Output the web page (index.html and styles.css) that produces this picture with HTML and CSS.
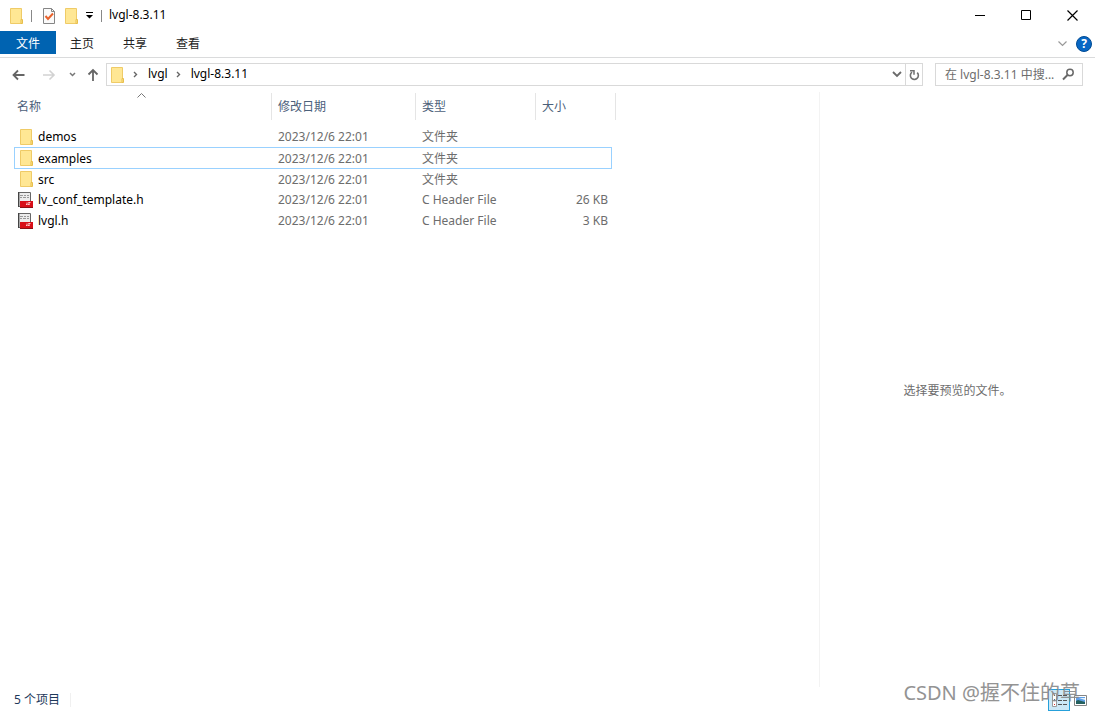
FILE: index.html
```html
<!DOCTYPE html>
<html lang="zh-CN">
<head>
<meta charset="utf-8">
<title>lvgl-8.3.11</title>
<link rel="stylesheet" href="styles.css">
</head>
<body>
<svg class="defs" aria-hidden="true">
  <symbol id="folder" viewBox="0 0 14 16">
    <path d="M.5.5h11v15H.5z" fill="#ffe794" stroke="#efcb67"/>
    <path d="M11 11.500h1.500v4H11z" fill="#ffe794" stroke="#e8bf4d"/>
  </symbol>
  <symbol id="header-file" viewBox="0 0 16 16">
    <path d="M1 .5h11.500v14H1z" fill="#ececec" stroke="#666"/>
    <path d="M2 3h3v1H2zM6 3h2v1H6zM9 3h2v1H9zM2 5h2v1H2zM5 5h3v1H5zM9 5h2v1H9z" fill="#999"/>
    <path d="M2 9h13v6H2z" fill="#d80f18"/>
    <path d="M2 15h13v1H2z" fill="#8c1115"/>
    <path d="M8 12.500h1v-2M12.500 10.500h-2l1 2h-2" fill="none" stroke="#ffc5c5"/>
    <path d="M0 0h1v15H0z" fill="#444"/>
  </symbol>
</svg>
<div class="window">
  <header class="titlebar">
    <svg class="folder"><use href="#folder"/></svg>
    <span class="bar"></span>
    <button class="plain props" aria-label="属性"><svg width="12" height="16" viewBox="0 0 12 16"><path d="M.5.5h8l3 3v12H.5z" fill="#fafafa" stroke="#858585"/><path d="M8.500.5v3h3" fill="none" stroke="#858585"/><path d="M2.500 8l2.500 3 5-5.500" fill="none" stroke="#e8622c" stroke-width="2"/></svg></button>
    <button class="plain newdir" aria-label="新建文件夹"><svg class="folder"><use href="#folder"/></svg></button>
    <button class="plain" aria-label="自定义快速访问工具栏"><svg width="7" height="7" viewBox="0 0 7 7"><path d="M0 0h7v1H0zM0 3h7L3.500 6.500z"/></svg></button>
    <span class="bar second"></span>
    <h1>lvgl-8.3.11</h1>
    <div class="controls">
      <button class="plain" aria-label="最小化"><svg width="11" height="11"><path d="M0 5.500h10" stroke="#000"/></svg></button>
      <button class="plain" aria-label="最大化"><svg width="11" height="11"><path d="M.5.5h9v9h-9z" fill="none" stroke="#000"/></svg></button>
      <button class="plain" aria-label="关闭"><svg width="11" height="11"><path d="M.5.5l10 10M10.500.5l-10 10" stroke="#000" stroke-width="1.200"/></svg></button>
    </div>
  </header>
  <nav class="tabs">
    <button class="tab active">文件</button>
    <button class="tab">主页</button>
    <button class="tab">共享</button>
    <button class="tab">查看</button>
    <button class="plain expand" aria-label="展开功能区"><svg width="9" height="6"><path d="M.5.5l4 4 4-4" fill="none" stroke="#999" stroke-width="1.200"/></svg></button>
    <button class="help" aria-label="帮助">?</button>
  </nav>
  <div class="toolbar">
    <button class="plain back" aria-label="后退"><svg width="13" height="12"><path d="M12.500 6H1.500M6 1.500L1.500 6 6 10.500" fill="none" stroke="#666" stroke-width="1.800"/></svg></button>
    <button class="plain forward" aria-label="前进"><svg width="13" height="12"><path d="M0 6h11M6.500 1.500L11 6l-4.500 4.500" fill="none" stroke="#d2d2d2" stroke-width="1.600"/></svg></button>
    <button class="plain recent" aria-label="最近"><svg width="7" height="5"><path d="M1 1l2.500 2.500L6 1" fill="none" stroke="#777" stroke-width="1.500"/></svg></button>
    <button class="plain up" aria-label="上移"><svg width="12" height="13"><path d="M6 13V2M1.500 6.500L6 2l4.500 4.500" fill="none" stroke="#666" stroke-width="1.800"/></svg></button>
    <div class="address">
      <svg class="folder"><use href="#folder"/></svg>
      <svg class="chev" width="5" height="7"><path d="M1 1l2.500 2.500L1 6" fill="none" stroke="#666" stroke-width="1.400"/></svg>
      <a href="#lvgl">lvgl</a>
      <svg class="chev" width="5" height="7"><path d="M1 1l2.500 2.500L1 6" fill="none" stroke="#666" stroke-width="1.400"/></svg>
      <a href="#lvgl-8.3.11">lvgl-8.3.11</a>
      <button class="plain drop" aria-label="历史"><svg width="10" height="7"><path d="M1 1l4 4 4-4" fill="none" stroke="#6a6a6a" stroke-width="1.800"/></svg></button>
      <button class="plain refresh" aria-label="刷新"><svg width="11" height="12"><path d="M8.200 3.600A4 4 0 1 1 3 3.200" fill="none" stroke="#707070" stroke-width="1.600"/><path d="M1 1.700h4v4" fill="none" stroke="#707070" stroke-width="1.500"/></svg></button>
    </div>
    <label class="search">
      <input type="text" placeholder="在 lvgl-8.3.11 中搜..." aria-label="搜索">
      <svg width="13" height="13"><circle cx="8" cy="4.500" r="3.200" fill="none" stroke="#686868" stroke-width="1.500"/><path d="M5.500 7L1 11.500" stroke="#686868" stroke-width="2"/></svg>
    </label>
  </div>
  <main class="content">
    <section class="list">
      <table>
        <colgroup><col class="c-name"><col class="c-date"><col class="c-type"><col class="c-size"><col class="c-edge"></colgroup>
        <thead>
          <tr>
            <th class="sorted"><span>名称</span><svg class="sort" width="9" height="5"><path d="M.5 4.500l4-4 4 4" fill="none" stroke="#777"/></svg></th>
            <th><span>修改日期</span></th><th><span>类型</span></th><th colspan="2"><span>大小</span></th>
          </tr>
        </thead>
        <tbody>
          <tr><td class="name"><div><svg class="folder"><use href="#folder"/></svg>demos</div></td><td>2023/12/6 22:01</td><td>文件夹</td><td class="size"></td></tr>
          <tr class="focused"><td class="name"><div><svg class="folder"><use href="#folder"/></svg>examples</div></td><td>2023/12/6 22:01</td><td>文件夹</td><td class="size"></td></tr>
          <tr><td class="name"><div><svg class="folder"><use href="#folder"/></svg>src</div></td><td>2023/12/6 22:01</td><td>文件夹</td><td class="size"></td></tr>
          <tr><td class="name"><div><svg class="file"><use href="#header-file"/></svg>lv_conf_template.h</div></td><td>2023/12/6 22:01</td><td>C Header File</td><td class="size">26 KB</td></tr>
          <tr><td class="name"><div><svg class="file"><use href="#header-file"/></svg>lvgl.h</div></td><td>2023/12/6 22:01</td><td>C Header File</td><td class="size">3 KB</td></tr>
        </tbody>
      </table>
    </section>
    <aside class="preview">选择要预览的文件。</aside>
  </main>
  <footer class="status">
    <span class="count">5 个项目</span>
    <div class="views">
      <button class="view on" aria-label="详细信息"><svg width="20" height="20"><path d="M3.500 3.500h4v13h-4z" fill="#fff" stroke="#9b9b9b"/><path d="M5 5h1v1H5z" fill="#444"/><path d="M5 9h1v2H5z" fill="#4078b0"/><path d="M5 14h1v1H5z" fill="#d33"/><path d="M9 5.500h4m1 0h4M9 10.500h4m1 0h4M9 14.500h4m1 0h4" stroke="#555"/></svg></button>
      <button class="view" aria-label="大缩略图"><svg width="13" height="11"><path d="M.5.5h12v10H.5z" fill="#fff" stroke="#858585"/><path d="M2 2h9v7H2z" fill="#5f9fe6"/><path d="M2 6l2-1 7 2v2H2z" fill="#24605e"/><path d="M5 3h6v2L8 4z" fill="#e4f3ff"/></svg></button>
    </div>
  </footer>
  <div class="watermark">CSDN @握不住的草</div>
</div>
</body>
</html>
```
FILE: styles.css
```css
* { box-sizing: border-box; }
body { margin: 0; background: #fff; color: #000; font: 12px/20px "Noto Sans", "Noto Sans CJK SC", sans-serif; }
svg { display: block; flex: none; }
button, input { font: inherit; }
.defs { position: absolute; width: 0; height: 0; }
.window { position: relative; display: flex; flex-direction: column; min-height: 100vh; }
.plain { display: flex; align-items: center; justify-content: center; padding: 0; border: 0; background: none; }
.folder { width: 14px; height: 16px; }

.titlebar { display: flex; align-items: center; height: 31px; padding-left: 10px; }
.bar { width: 1px; height: 12px; margin: 0 11px 0 7px; background: #888; }
.bar.second { margin: 0 7px 0 8px; }
.newdir { margin: 0 7px 0 10px; }
h1 { margin: 0; padding-bottom: 1px; font-size: 12px; font-weight: 400; line-height: 20px; }
.controls { display: flex; align-self: stretch; margin-left: auto; }
.controls button { width: 46px; }

.tabs { display: flex; align-items: center; height: 27px; padding-right: 3px; border-bottom: 1px solid #dadbdc; }
.tab { height: 23px; align-self: flex-start; padding: 2px 14px 0; border: 0; background: none; color: #222; line-height: 20px; }
.tab + .tab { padding-right: 15px; }
.tab.active { padding: 2px 16px 0; background: #0063b1; color: #fff; }
.expand { margin: 0 9px 0 auto; }
.help { width: 16px; height: 16px; padding: 0; border: 1px solid #004b94; border-radius: 50%; background: #0867c4; color: #fff; font-size: 12px; font-weight: 700; line-height: 14px; }

.toolbar { display: flex; align-items: center; height: 34px; padding: 0 12px 1px; }
.forward { margin-left: 18px; }
.recent { margin-left: 13px; }
.up { margin: 0 7px 0 11px; }
.address { display: flex; flex: 1; align-items: center; height: 23px; padding-left: 4px; border: 1px solid #d9d9d9; }
.address a { padding-bottom: 1px; color: #000; text-decoration: none; }
.chev { margin: 0 10px 0 8px; }
.drop { width: 16px; margin-left: auto; }
.refresh { align-self: stretch; width: 17px; border-left: 1px solid #d9d9d9; }
.search { display: flex; align-items: center; width: 148px; height: 23px; margin-left: 12px; padding: 0 7px 0 9px; border: 1px solid #d9d9d9; }
.search input { flex: 1; min-width: 0; padding: 0; border: 0; outline: 0; background: none; }
.search input::placeholder { color: #6d6d6d; opacity: 1; }

.content { display: flex; flex: 1; }
.list { flex: 1; padding: 1px 0 0 14px; }
table { width: 602px; table-layout: fixed; border-collapse: separate; border-spacing: 0; }
.c-name { width: 258px; }
.c-date { width: 144px; }
.c-type { width: 120px; }
.c-size { width: 76px; }
.c-edge { width: 4px; }
th { padding: 0 0 6px; color: #4c607a; font-weight: 400; text-align: left; }
th span { display: block; height: 27px; padding-left: 6px; border-right: 1px solid #e5e5e5; line-height: 27px; }
.sorted { position: relative; }
.sorted span { padding-left: 3px; }
.sort { position: absolute; top: 0; left: calc(50% - 6px); }
td { height: 21px; padding: 0 0 0 6px; color: #6d6d6d; line-height: 19px; white-space: nowrap; }
td.name { color: #000; }
.name div { display: flex; align-items: center; }
.name .folder { margin-right: 4px; }
.file { width: 16px; height: 16px; margin: 0 4px 0 -2px; }
td.size { padding: 0 4px 0 0; text-align: right; }
.focused td, .focused + tr td { border: 0 solid #99d1ff; border-top-width: 1px; }
.focused td.name { border-left-width: 1px; padding-left: 5px; }
.focused td.size { border-right-width: 1px; }
.preview { display: flex; align-items: center; justify-content: center; width: 276px; padding-top: 2px; border-left: 1px solid #f3f3f3; color: #6d6d6d; }

.status { display: flex; align-items: center; height: 25px; padding: 1px 8px 0 14px; color: #1e395b; }
.count { padding-right: 10px; border-right: 1px solid #f0f0f0; line-height: 14px; }
.views { display: flex; align-items: center; gap: 4px; margin-left: auto; }
.view { padding: 0; border: 0; background: none; }
.view.on { border: 1px solid #26a0da; background: #cce8f6; }
.watermark { position: absolute; right: 15px; bottom: 6px; color: #888; font-size: 20px; line-height: 26px; opacity: .9; pointer-events: none; }
```
